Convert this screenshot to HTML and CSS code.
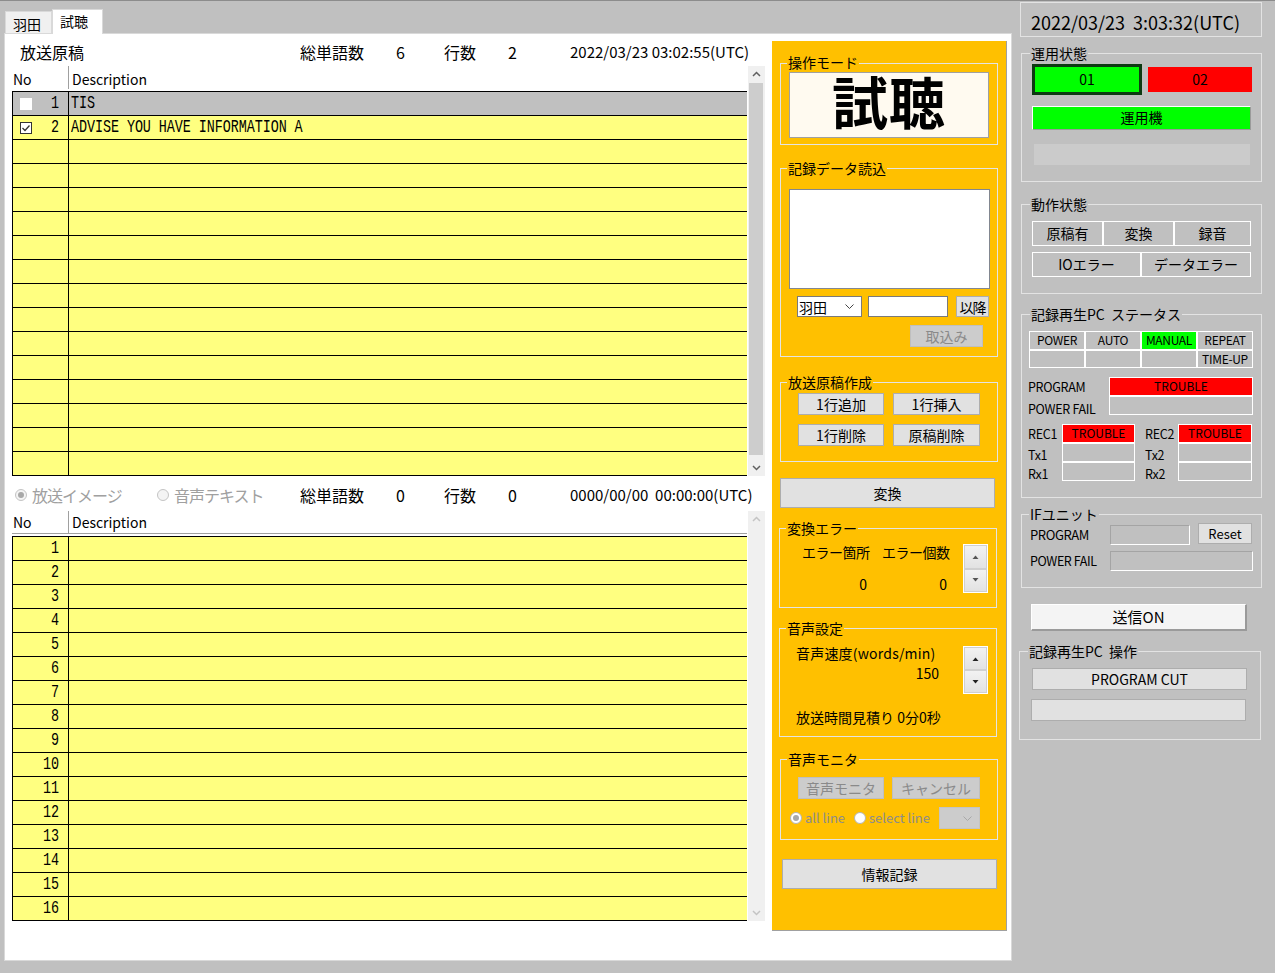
FILE: index.html
```html
<!DOCTYPE html>
<html lang="ja">
<head>
<meta charset="utf-8">
<title>試聴</title>
<link rel="stylesheet" href="styles.css">
</head>
<body>
<div class="app">
  <div class="tabs-area">
    <div class="tabstrip">
      <div class="tab">羽田</div>
      <div class="tab active">試聴</div>
    </div>
    <div class="tabpage">
      <div class="left-col">
        <div class="info-row">
          <span class="c-title">放送原稿</span>
          <span class="c-lbl">総単語数</span>
          <span class="c-num">6</span>
          <span class="c-lbl2">行数</span>
          <span class="c-num2">2</span>
          <span class="c-date">2022/03/23 03:02:55(UTC)</span>
        </div>
        <div class="grid-wrap">
          <div class="grid">
            <div class="grid-head"><span class="h-no">No</span><span class="h-desc">Description</span></div>
            <div class="grid-body">
              <div class="r sel"><div class="n"><span class="cb"></span><span class="num">1</span></div><div class="d"><span class="mono">TIS</span></div></div>
              <div class="r"><div class="n"><span class="cb on"><svg width="12" height="12" viewBox="0 0 12 12"><polyline points="2.5,6 5,8.5 9.5,3.5" fill="none" stroke="#333" stroke-width="1.3"/></svg></span><span class="num">2</span></div><div class="d"><span class="mono">ADVISE YOU HAVE INFORMATION A</span></div></div>
              <div class="r"><div class="n"></div><div class="d"></div></div>
              <div class="r"><div class="n"></div><div class="d"></div></div>
              <div class="r"><div class="n"></div><div class="d"></div></div>
              <div class="r"><div class="n"></div><div class="d"></div></div>
              <div class="r"><div class="n"></div><div class="d"></div></div>
              <div class="r"><div class="n"></div><div class="d"></div></div>
              <div class="r"><div class="n"></div><div class="d"></div></div>
              <div class="r"><div class="n"></div><div class="d"></div></div>
              <div class="r"><div class="n"></div><div class="d"></div></div>
              <div class="r"><div class="n"></div><div class="d"></div></div>
              <div class="r"><div class="n"></div><div class="d"></div></div>
              <div class="r"><div class="n"></div><div class="d"></div></div>
              <div class="r"><div class="n"></div><div class="d"></div></div>
              <div class="r"><div class="n"></div><div class="d"></div></div>
            </div>
          </div>
          <div class="vscroll">
            <div class="sb-btn"><svg width="17" height="17" viewBox="0 0 17 17"><polyline points="5,10 8.5,6.5 12,10" fill="none" stroke="#606060" stroke-width="1.5"/></svg></div>
            <div class="sb-thumb"></div>
            <div class="sb-space"></div>
            <div class="sb-btn"><svg width="17" height="17" viewBox="0 0 17 17"><polyline points="5,7 8.5,10.5 12,7" fill="none" stroke="#606060" stroke-width="1.5"/></svg></div>
          </div>
        </div>

        <div class="radio-row">
          <span class="rb-item w1"><span class="radio dis checked"></span><span class="rb-text">放送イメージ</span></span>
          <span class="rb-item w2"><span class="radio dis"></span><span class="rb-text">音声テキスト</span></span>
          <span class="c-lbl">総単語数</span>
          <span class="c-num">0</span>
          <span class="c-lbl2">行数</span>
          <span class="c-num2">0</span>
          <span class="c-date">0000/00/00&nbsp;&nbsp;00:00:00(UTC)</span>
        </div>

        <div class="grid-wrap lower">
          <div class="grid">
            <div class="grid-head"><span class="h-no">No</span><span class="h-desc">Description</span></div>
            <div class="grid-body">
              <div class="r"><div class="n"><span class="num">1</span></div><div class="d"></div></div>
              <div class="r"><div class="n"><span class="num">2</span></div><div class="d"></div></div>
              <div class="r"><div class="n"><span class="num">3</span></div><div class="d"></div></div>
              <div class="r"><div class="n"><span class="num">4</span></div><div class="d"></div></div>
              <div class="r"><div class="n"><span class="num">5</span></div><div class="d"></div></div>
              <div class="r"><div class="n"><span class="num">6</span></div><div class="d"></div></div>
              <div class="r"><div class="n"><span class="num">7</span></div><div class="d"></div></div>
              <div class="r"><div class="n"><span class="num">8</span></div><div class="d"></div></div>
              <div class="r"><div class="n"><span class="num">9</span></div><div class="d"></div></div>
              <div class="r"><div class="n"><span class="num">10</span></div><div class="d"></div></div>
              <div class="r"><div class="n"><span class="num">11</span></div><div class="d"></div></div>
              <div class="r"><div class="n"><span class="num">12</span></div><div class="d"></div></div>
              <div class="r"><div class="n"><span class="num">13</span></div><div class="d"></div></div>
              <div class="r"><div class="n"><span class="num">14</span></div><div class="d"></div></div>
              <div class="r"><div class="n"><span class="num">15</span></div><div class="d"></div></div>
              <div class="r"><div class="n"><span class="num">16</span></div><div class="d"></div></div>
            </div>
          </div>
          <div class="vscroll dis">
            <div class="sb-btn"><svg width="17" height="17" viewBox="0 0 17 17"><polyline points="5,10 8.5,6.5 12,10" fill="none" stroke="#c4c4c4" stroke-width="1.5"/></svg></div>
            <div class="sb-space"></div>
            <div class="sb-btn"><svg width="17" height="17" viewBox="0 0 17 17"><polyline points="5,7 8.5,10.5 12,7" fill="none" stroke="#c4c4c4" stroke-width="1.5"/></svg></div>
          </div>
        </div>
      </div>

      <div class="op">
        <fieldset class="fs f-mode">
          <legend>操作モード</legend>
          <div class="mode-box">試聴</div>
        </fieldset>

        <fieldset class="fs f-load">
          <legend>記録データ読込</legend>
          <div class="load-area"></div>
          <div class="load-row">
            <div class="select"><span>羽田</span><svg width="9" height="5" viewBox="0 0 9 5"><polyline points="0.5,0.5 4.5,4.5 8.5,0.5" fill="none" stroke="#444" stroke-width="1"/></svg></div>
            <div class="txt"></div>
            <button class="btn b-after">以降</button>
          </div>
          <button class="btn dis b-take">取込み</button>
        </fieldset>

        <fieldset class="fs f-make">
          <legend>放送原稿作成</legend>
          <div class="btn-row"><button class="btn b-m1">1行追加</button><button class="btn b-m2">1行挿入</button></div>
          <div class="btn-row r2"><button class="btn b-m1">1行削除</button><button class="btn b-m2">原稿削除</button></div>
        </fieldset>

        <button class="btn b-conv">変換</button>

        <fieldset class="fs f-err">
          <legend>変換エラー</legend>
          <div class="err">
            <div class="err-grid">
              <span class="eg-l">エラー箇所</span><span class="eg-l">エラー個数</span>
              <span class="eg-v">0</span><span class="eg-v">0</span>
            </div>
            <div class="spin s-err">
              <div class="sp"><svg width="7" height="4" viewBox="0 0 7 4"><polygon points="0.5,4 3.5,0.5 6.5,4" fill="#555"/></svg></div>
              <div class="sp"><svg width="7" height="4" viewBox="0 0 7 4"><polygon points="0.5,0 3.5,3.5 6.5,0" fill="#555"/></svg></div>
            </div>
          </div>
        </fieldset>

        <fieldset class="fs f-voice">
          <legend>音声設定</legend>
          <div class="speed">
            <div class="speed-left">
              <div class="sp-lbl">音声速度(words/min)</div>
              <div class="sp-val">150</div>
            </div>
            <div class="spin s-speed">
              <div class="sp"><svg width="7" height="4" viewBox="0 0 7 4"><polygon points="0.5,4 3.5,0.5 6.5,4" fill="#222"/></svg></div>
              <div class="sp"><svg width="7" height="4" viewBox="0 0 7 4"><polygon points="0.5,0 3.5,3.5 6.5,0" fill="#222"/></svg></div>
            </div>
          </div>
          <div class="estimate">放送時間見積り 0分0秒</div>
        </fieldset>

        <fieldset class="fs f-mon">
          <legend>音声モニタ</legend>
          <div class="btn-row"><button class="btn dis b-mon1">音声モニタ</button><button class="btn dis b-mon2">キャンセル</button></div>
          <div class="mon-row">
            <span class="radio wht checked"></span><span class="mon-t t1">all line</span>
            <span class="radio wht"></span><span class="mon-t">select line</span>
            <div class="combo-dis"><svg width="9" height="5" viewBox="0 0 9 5"><polyline points="0.5,0.5 4.5,4.5 8.5,0.5" fill="none" stroke="#a8a8a8" stroke-width="1"/></svg></div>
          </div>
        </fieldset>

        <button class="btn b-info">情報記録</button>
      </div>
    </div>
  </div>

  <div class="rp">
    <div class="clock">2022/03/23  3:03:32(UTC)</div>

    <fieldset class="rfs f-ops">
      <legend>運用状態</legend>
      <div class="ops-row">
        <div class="st01">01</div>
        <div class="st02">02</div>
      </div>
      <div class="st-active">運用機</div>
      <div class="st-bar"></div>
    </fieldset>

    <fieldset class="rfs f-act">
      <legend>動作状態</legend>
      <div class="cells c3">
        <div class="cell w71">原稿有</div><div class="cell w71">変換</div><div class="cell w77">録音</div>
      </div>
      <div class="cells c2">
        <div class="cell w109">IOエラー</div><div class="cell w110">データエラー</div>
      </div>
    </fieldset>

    <fieldset class="rfs f-pc">
      <legend>記録再生PC&nbsp;&nbsp;ステータス</legend>
      <div class="pc-grid">
        <div class="g">POWER</div><div class="g">AUTO</div><div class="g green">MANUAL</div><div class="g">REPEAT</div>
        <div class="g"></div><div class="g"></div><div class="g"></div><div class="g">TIME-UP</div>
      </div>
      <div class="prog">
        <div class="lbls"><div class="lb">PROGRAM</div><div class="lb">POWER FAIL</div></div>
        <div class="stack w144"><div class="sc red">TROUBLE</div><div class="sc"></div></div>
      </div>
      <div class="recs">
        <div class="lbls l34"><div class="lb">REC1</div><div class="lb">Tx1</div><div class="lb">Rx1</div></div>
        <div class="stack w73"><div class="sc red">TROUBLE</div><div class="sc"></div><div class="sc"></div></div>
        <div class="lbls l33"><div class="lb">REC2</div><div class="lb">Tx2</div><div class="lb">Rx2</div></div>
        <div class="stack w74"><div class="sc red">TROUBLE</div><div class="sc"></div><div class="sc"></div></div>
      </div>
    </fieldset>

    <fieldset class="rfs f-if">
      <legend>IFユニット</legend>
      <div class="if-row">
        <span class="if-l">PROGRAM</span>
        <div class="sunk w80"></div>
        <button class="btn b-reset">Reset</button>
      </div>
      <div class="if-row r2">
        <span class="if-l">POWER FAIL</span>
        <div class="sunk w143"></div>
      </div>
    </fieldset>

    <button class="b-send">送信ON</button>

    <fieldset class="rfs f-pcop">
      <legend>記録再生PC&nbsp;&nbsp;操作</legend>
      <button class="btn b-cut">PROGRAM CUT</button>
      <button class="btn b-blank"></button>
    </fieldset>
  </div>
</div>
</body>
</html>
```

FILE: styles.css
```css
* { box-sizing: border-box; }
html, body { margin: 0; padding: 0; }
body {
  background: #c0c0c0;
  font-family: "Noto Sans CJK JP", "Noto Sans", sans-serif;
  font-size: 14px;
  color: #000;
  border-top: 1px solid #8c8c8c;
  height: 973px;
  overflow: hidden;
}
.app { display: flex; height: 972px; }

/* ---------- tabs ---------- */
.tabs-area { width: 1013px; flex: none; display: flex; flex-direction: column; }
.tabstrip { height: 32px; display: flex; align-items: flex-end; padding-left: 5px; }
.tab {
  height: 22px; width: 47px; background: #f0f0f0;
  border: 1px solid #d9d9d9; border-bottom: none;
  font-size: 14px; line-height: 18px; padding: 3px 0 0 7px;
}
.tab.active {
  height: 25px; width: 51px; background: #fff; margin-bottom: -1px;
  position: relative; z-index: 1; padding-top: 2px;
}
.tabpage {
  margin-left: 4px; width: 1008px; height: 928px; background: #fff;
  border: 1px solid #d9d9d9; display: flex;
}

/* ---------- left column ---------- */
.left-col { width: 767px; flex: none; display: flex; flex-direction: column; }
.info-row, .radio-row {
  display: flex; height: 20px; line-height: 20px; font-size: 16px; white-space: nowrap;
}
.info-row { margin-top: 8px; padding-left: 15px; }
.c-title { width: 280px; }
.c-lbl { width: 96px; }
.c-num { width: 48px; }
.c-lbl2 { width: 64px; }
.c-num2 { width: 62px; }
.c-date { font-size: 15px; }

.grid-wrap { margin-top: 4px; padding-left: 7px; display: flex; height: 410px; }
.grid { width: 735px; display: flex; flex-direction: column; }
.grid-head { height: 25px; display: flex; align-items: flex-end; font-size: 14px; line-height: 20px; padding-bottom: 2px; }
.h-no { width: 57px; padding-left: 1px; height: 23px; border-right: 1px solid #a0a0a0; display: flex; align-items: flex-end; }
.h-desc { padding-left: 3px; }
.grid-body { border-left: 1px solid #000; border-top: 1px solid #000; }
.r { display: flex; height: 24px; border-bottom: 1px solid #000; background: #ffff80; }
.r.sel { background: #c0c0c0; }
.n {
  width: 56px; border-right: 1px solid #000; display: flex; align-items: center;
  padding-right: 9px;
}
.d { flex: 1; padding-left: 2px; display: flex; align-items: center; }
.mono, .num {
  font-family: "Liberation Mono", "DejaVu Sans Mono", monospace;
  font-size: 13.4px; line-height: 16px; display: inline-block;
  transform: scaleY(1.32); letter-spacing: -0.05px;
}
.num { margin-left: auto; }
.cb { width: 12px; height: 12px; background: #fff; margin-left: 7px; display: block; }
.cb.on { border: 1px solid #333; }
.cb svg { display: block; margin: -1px; }

.vscroll { width: 17px; margin-left: 1px; background: #f0f0f0; display: flex; flex-direction: column; height: 410px; }
.sb-btn { height: 17px; }
.sb-btn svg { display: block; }
.sb-thumb { height: 372px; margin: 0 2px 0 1px; background: #cdcdcd; }
.sb-space { flex: 1; }

.radio-row { margin-top: 9px; padding-left: 10px; }
.rb-item { display: flex; align-items: center; }
.w1 { width: 142px; }
.w2 { width: 143px; }
.rb-text { color: #a0a0a0; margin-left: 5px; letter-spacing: -1px; }
.radio {
  width: 12px; height: 12px; border-radius: 50%; border: 1px solid #c4c4c4;
  background: #f4f4f4; display: inline-flex; align-items: center; justify-content: center; flex: none;
}
.radio.checked::after { content: ""; width: 6px; height: 6px; border-radius: 50%; background: #a8a8a8; }
.radio.wht { background: #fff; border-color: #b4b4b4; }

.grid-wrap.lower { margin-top: 6px; }
.lower .grid-head { height: 23px; border-bottom: 1px solid #a0a0a0; padding-bottom: 0; align-items: stretch; }
.lower .h-no { height: auto; align-items: center; }
.lower .h-desc { display: flex; align-items: center; }
.lower .grid-body { margin-top: 2px; }

/* ---------- orange panel ---------- */
.op {
  width: 235px; height: 890px; margin-top: 7px; background: #ffc000;
  border-right: 1px solid #a0a0a0; border-bottom: 1px solid #a0a0a0;
  display: flex; flex-direction: column; padding-left: 8px;
}
.fs {
  margin: 0; border: 1px solid #e4e4e4; width: 218px; min-width: 0;
  padding: 0 8px 0 7px;
}
.fs legend, .rfs legend {
  padding: 0 1px; font-size: 14px; line-height: 18px; height: 18px; margin-left: -1px;
}
.btn {
  font: inherit; font-size: 14px; background: #e1e1e1; border: 1px solid #adadad;
  padding: 0; color: #000; line-height: 18px; display: block;
}
.btn.dis { background: #cccccc; border-color: #bfbfbf; color: #8a8a8a; }

.f-mode { margin-top: 13px; padding-bottom: 6px; }
.f-mode legend { font-family: "Liberation Sans", "Noto Sans CJK JP", sans-serif; }
.mode-box {
  width: 200px; height: 66px; border: 1px solid #a0a0a0; background: #fffaf0;
  margin-left: 1px; text-align: center;
  font-family: "Liberation Sans", "Noto Sans CJK JP", sans-serif;
  font-size: 56px; font-weight: 700; line-height: 63px; letter-spacing: 1px;
}

.f-load { margin-top: 14px; padding-bottom: 9px; }
.load-area { margin-top: 12px; margin-left: 1px; width: 201px; height: 100px; border: 1px solid #828790; background: #fff; }
.load-row { display: flex; margin-top: 7px; height: 21px; }
.select {
  margin-left: 9px; width: 65px; height: 21px; border: 1px solid #7a7a7a; background: #fff;
  display: flex; align-items: center; justify-content: space-between; padding: 0 7px 0 1px;
  line-height: 18px;
}
.txt { margin-left: 6px; width: 80px; height: 21px; border: 1px solid #7a7a7a; background: #fff; }
.b-after { margin-left: 8px; width: 33px; height: 21px; letter-spacing: -1px; }
.b-take { margin-top: 8px; margin-left: 122px; width: 73px; height: 22px; }

.f-make { margin-top: 16px; padding-bottom: 15px; }
.btn-row { display: flex; margin-top: 2px; }
.btn-row.r2 { margin-top: 9px; }
.btn-row .btn { height: 22px; }
.b-m1 { margin-left: 10px; width: 86px; }
.b-m2 { margin-left: 9px; width: 87px; }

.b-conv { margin-top: 16px; width: 215px; height: 30px; }

.f-err { margin-top: 11px; margin-left: -1px; padding-bottom: 13px; }
.err { display: flex; }
.err-grid {
  display: grid; grid-template-columns: 80px 80px; row-gap: 12px; margin-left: 15px;
  margin-top: 5px; line-height: 20px;
}
.eg-l { letter-spacing: -0.5px; }
.eg-v { text-align: right; padding-right: 15px; }
.spin {
  width: 25px; border: 1px solid #fff; display: flex; flex-direction: column; background: #fff;
}
.sp {
  flex: 1; background: linear-gradient(#f2f2f2, #e2e2e2); border: 1px solid #d0d0d0;
  display: flex; align-items: center; justify-content: center;
}
.sp svg { display: block; }
.s-err { height: 49px; margin-top: 7px; margin-left: 1px; }

.f-voice { margin-top: 11px; margin-left: -1px; padding-bottom: 9px; }
.speed { display: flex; padding-left: 9px; }
.speed-left { width: 143px; line-height: 20px; }
.sp-lbl { margin-top: 6px; white-space: nowrap; letter-spacing: 0.2px; }
.sp-val { text-align: right; }
.s-speed { height: 48px; margin-top: 9px; margin-left: 24px; }
.estimate { margin-top: 13px; padding-left: 9px; line-height: 20px; white-space: nowrap; }

.f-mon { margin-top: 13px; padding-bottom: 10px; }
.f-mon .btn-row { margin-top: 9px; }
.b-mon1 { margin-left: 10px; width: 86px; height: 22px; }
.b-mon2 { margin-left: 8px; width: 88px; height: 22px; }
.mon-row { display: flex; align-items: center; margin-top: 8px; height: 22px; }
.mon-row .radio { margin-left: 2px; }
.mon-t { margin-left: 3px; font-size: 13px; color: #8c8c8c; line-height: 18px; }
.mon-t.t1 { margin-right: 7px; }
.combo-dis {
  margin-left: auto; margin-right: 9px; width: 41px; height: 22px; background: #cccccc; border: 1px solid #c4c4c4;
  display: flex; align-items: center; justify-content: flex-end; padding-right: 7px;
}

.b-info { margin-top: 19px; margin-left: 2px; width: 215px; height: 30px; }

/* ---------- right panel ---------- */
.rp { flex: 1; display: flex; flex-direction: column; padding-left: 7px; }
.clock {
  margin-top: 1px; width: 242px; height: 35px; border: 1px solid #e3e3e3;
  font-size: 18px; line-height: 30px; padding: 4px 0 0 10px; white-space: pre;
}
.rfs {
  margin: 0; border: 1px solid #e3e3e3; width: 241px; min-width: 0;
  padding: 0 7px 0 10px; margin-left: 1px;
}
.rfs legend { margin-left: -2px; }

.f-ops { margin-top: 7px; padding-bottom: 16px; }
.ops-row { display: flex; align-items: center; margin-top: 2px; }
.st01 {
  width: 110px; height: 31px; background: #00ff00; border: 3px solid #0d3a12;
  text-align: center; line-height: 24px;
}
.st02 {
  margin-left: 6px; width: 104px; height: 25px; background: #ff0000;
  text-align: center; line-height: 25px;
}
.st-active {
  margin-top: 11px; width: 219px; height: 24px; background: #00ff00;
  border: 1px solid #fff; border-right-color: #9a9a9a; border-bottom-color: #9a9a9a;
  text-align: center; line-height: 21px;
}
.st-bar { margin-top: 14px; margin-left: 2px; width: 216px; height: 21px; background: #cbcbcb; }

.f-act { margin-top: 13px; padding-bottom: 16px; }
.cells { display: flex; margin-top: 8px; }
.cells.c2 { margin-top: 6px; }
.cell {
  height: 25px; border: 1px solid #fff; text-align: center; line-height: 22px;
}
.w71 { width: 71px; }
.w77 { width: 77px; }
.w109 { width: 109px; }
.w110 { width: 110px; }

.f-pc { margin-top: 11px; padding: 0 7px 16px 7px; }
.f-pc legend { margin-left: 1px; }
.pc-grid {
  margin-top: 8px; width: 224px; display: grid; grid-template-columns: repeat(4, 56px);
  grid-template-rows: 19px 18px;
}
.g { border: 1px solid #fff; font-size: 12px; line-height: 16px; text-align: center; white-space: nowrap; letter-spacing: -0.3px; }
.g.green { background: #00ff00; }
.prog { display: flex; margin-top: 9px; margin-left: -1px; height: 38px; }
.lbls { display: flex; flex-direction: column; width: 81px; }
.lb { height: 19px; line-height: 19px; font-size: 12.5px; white-space: nowrap; letter-spacing: -0.3px; }
.prog .lbls { height: 38px; }
.prog .lb + .lb { margin-top: 3px; }
.stack { display: flex; flex-direction: column; }
.sc { height: 19px; border: 1px solid #fff; text-align: center; font-size: 12px; line-height: 16px; }
.sc.red { background: #ff0000; }
.w144 { width: 144px; }
.w73 { width: 73px; }
.w74 { width: 74px; }
.recs { display: flex; margin-top: 9px; margin-left: -1px; }
.recs .lb + .lb { padding-top: 2px; }
.l34 { width: 34px; }
.l33 { width: 33px; margin-left: 10px; }

.f-if { margin-top: 7px; padding: 0 7px 16px 8px; }
.f-if legend { margin-left: -1px; }
.if-row { display: flex; align-items: flex-start; height: 21px; }
.if-l { width: 80px; font-size: 13px; line-height: 20px; margin-top: 2px; white-space: nowrap; letter-spacing: -0.4px; }
.if-row.r2 { margin-top: 7px; height: 20px; }
.if-row.r2 .if-l { margin-top: 0; font-size: 12.5px; }
.sunk {
  height: 20px; border: 1px solid #fff; border-top-color: #a4a4a4; border-left-color: #a4a4a4;
}
.if-row .sunk.w80 { margin-top: 2px; }
.w80 { width: 80px; }
.w143 { width: 143px; }
.b-reset { margin-left: 8px; width: 54px; height: 21px; font-size: 13px; }

.b-send {
  font: inherit; font-size: 15px; margin-top: 16px; margin-left: 11px; width: 216px; height: 27px;
  background: #f4f4f4; border: 1px solid #fff; border-right: 2px solid #9a9a9a; border-bottom: 2px solid #9a9a9a;
  padding: 0; line-height: 22px; color: #000;
}

.f-pcop { margin-top: 11px; margin-left: -1px; width: 242px; padding: 0 7px 18px 12px; }
.f-pcop legend { margin-left: -4px; }
.b-cut { margin-top: 8px; width: 215px; height: 22px; font-size: 14px; }
.b-blank { margin-top: 9px; margin-left: -1px; width: 215px; height: 22px; }
```
